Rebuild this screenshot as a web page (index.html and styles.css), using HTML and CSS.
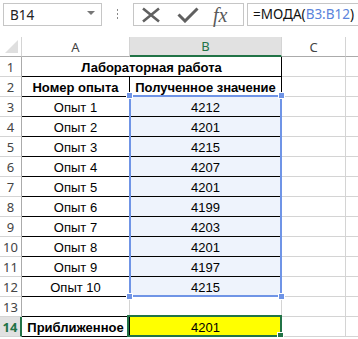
FILE: index.html
```html
<!DOCTYPE html>
<html lang="ru">
<head>
    <meta charset="utf-8">
    <title>МОДА</title>
    <link rel="stylesheet" href="styles.css">
</head>
<body>
    <div class="toolbar">
        <div class="name-box">
            <span>B14</span>
            <span class="drop"></span>
        </div>
        <div class="grip">
            <svg width="3" height="11" viewBox="0 0 3 11"><rect x="1" y="0" width="1" height="2" fill="#8a8a8a"/><rect x="1" y="4" width="1" height="2" fill="#8a8a8a"/><rect x="1" y="8" width="1" height="2" fill="#8a8a8a"/></svg>
        </div>
        <div class="buttons">
            <svg class="icon-x" width="20" height="16" viewBox="0 0 20 16"><path d="M2 1.5 L18 14.5 M18 1.5 L2 14.5" stroke="#606060" stroke-width="2.6" fill="none"/></svg>
            <svg class="icon-ok" width="22" height="16" viewBox="0 0 22 16"><path d="M1.5 7.5 L8 14 L20.5 1.5" stroke="#606060" stroke-width="3" fill="none"/></svg>
            <span class="fx">fx</span>
        </div>
        <div class="formula">=МОДА(<span class="ref">B3:B12</span>)</div>
    </div>

    <div class="sheet">
        <div class="corner"><span class="tri"></span></div>
        <div class="col-head">A</div>
        <div class="col-head active">B</div>
        <div class="col-head">C</div>
        <div class="col-head last"></div>

        <div class="row-head">1</div>
        <div class="cell bold merged bd-r bd-b">Лабораторная работа</div>
        <div class="cell"></div>
        <div class="cell last"></div>

        <div class="row-head">2</div>
        <div class="cell bold bd-r bd-b">Номер опыта</div>
        <div class="cell bold bd-r bd-b">Полученное значение</div>
        <div class="cell"></div>
        <div class="cell last"></div>

        <div class="row-head">3</div>
        <div class="cell bd-r bd-b">Опыт 1</div>
        <div class="cell sel bd-r bd-b">4212</div>
        <div class="cell"></div>
        <div class="cell last"></div>

        <div class="row-head">4</div>
        <div class="cell bd-r bd-b">Опыт 2</div>
        <div class="cell sel bd-r bd-b">4201</div>
        <div class="cell"></div>
        <div class="cell last"></div>

        <div class="row-head">5</div>
        <div class="cell bd-r bd-b">Опыт 3</div>
        <div class="cell sel bd-r bd-b">4215</div>
        <div class="cell"></div>
        <div class="cell last"></div>

        <div class="row-head">6</div>
        <div class="cell bd-r bd-b">Опыт 4</div>
        <div class="cell sel bd-r bd-b">4207</div>
        <div class="cell"></div>
        <div class="cell last"></div>

        <div class="row-head">7</div>
        <div class="cell bd-r bd-b">Опыт 5</div>
        <div class="cell sel bd-r bd-b">4201</div>
        <div class="cell"></div>
        <div class="cell last"></div>

        <div class="row-head">8</div>
        <div class="cell bd-r bd-b">Опыт 6</div>
        <div class="cell sel bd-r bd-b">4199</div>
        <div class="cell"></div>
        <div class="cell last"></div>

        <div class="row-head">9</div>
        <div class="cell bd-r bd-b">Опыт 7</div>
        <div class="cell sel bd-r bd-b">4203</div>
        <div class="cell"></div>
        <div class="cell last"></div>

        <div class="row-head">10</div>
        <div class="cell bd-r bd-b">Опыт 8</div>
        <div class="cell sel bd-r bd-b">4201</div>
        <div class="cell"></div>
        <div class="cell last"></div>

        <div class="row-head">11</div>
        <div class="cell bd-r bd-b">Опыт 9</div>
        <div class="cell sel bd-r bd-b">4197</div>
        <div class="cell"></div>
        <div class="cell last"></div>

        <div class="row-head">12</div>
        <div class="cell bd-r bd-b">Опыт 10</div>
        <div class="cell sel bd-r bd-b">4215</div>
        <div class="cell"></div>
        <div class="cell last"></div>

        <div class="row-head">13</div>
        <div class="cell bd-b"></div>
        <div class="cell"></div>
        <div class="cell"></div>
        <div class="cell last"></div>

        <div class="row-head active">14</div>
        <div class="cell bold bd-r bd-b">Приближенное</div>
        <div class="cell yellow bd-r bd-b">4201</div>
        <div class="cell"></div>
        <div class="cell last"></div>

        <!-- range highlight for B3:B12 -->
        <div class="range">
            <span class="handle tl"></span>
            <span class="handle tr"></span>
            <span class="handle bl"></span>
            <span class="handle br"></span>
        </div>

        <!-- active cell B14 -->
        <div class="active-cell"><span class="fill-handle"></span></div>
    </div>
</body>
</html>
```

FILE: styles.css
```css
/* Page reset */
body {
    margin: 0;
    background: #ffffff;
    overflow: hidden;
    font-family: "Liberation Sans", Arial, sans-serif;
}

/* Formula bar strip */
.toolbar {
    display: flex;
    align-items: flex-start;
    height: 37px;
    padding-top: 3px;
    box-sizing: border-box;
}

.name-box {
    margin-left: 3px;
    width: 99px;
    height: 23px;
    box-sizing: border-box;
    border: 1px solid #c6c6c6;
    display: flex;
    align-items: center;
    justify-content: space-between;
    padding: 0 6px 0 6px;
    font-family: "Noto Sans", sans-serif;
    font-size: 13.5px;
    color: #222;
}

/* little dropdown arrow in the name box */
.drop {
    width: 0;
    height: 0;
    border-left: 4px solid transparent;
    border-right: 4px solid transparent;
    border-top: 4px solid #777;
    margin-top: -4px;
}

.grip {
    width: 31px;
    height: 23px;
    display: flex;
    align-items: center;
    justify-content: center;
}

.buttons {
    width: 111px;
    height: 23px;
    box-sizing: border-box;
    border: 1px solid #c6c6c6;
    display: flex;
    align-items: center;
    padding-left: 7px;
}

.icon-x {
    margin-top: 1px;
}

.icon-ok {
    margin-left: 16px;
    margin-top: 1px;
}

.fx {
    margin-left: 14px;
    font-family: "Liberation Serif", serif;
    font-style: italic;
    font-size: 20px;
    color: #5a5a5a;
    line-height: 20px;
}

.formula {
    flex: 1;
    margin-left: 3px;
    margin-right: -2px;
    height: 23px;
    box-sizing: border-box;
    border: 1px solid #c6c6c6;
    padding-left: 5px;
    font-family: "Noto Sans", sans-serif;
    font-size: 13.5px;
    line-height: 21px;
    color: #111;
    white-space: nowrap;
    overflow: hidden;
}

.ref {
    color: #5b84dc;
}

/* Worksheet grid */
.sheet {
    position: relative;
    display: grid;
    grid-template-columns: 22px 108px 152px 64px 12px;
    grid-auto-rows: 20px;
    font-size: 13px;
    color: #000;
}

.corner,
.col-head,
.row-head,
.cell {
    box-sizing: border-box;
    border-right: 1px solid #d4d4d4;
    border-bottom: 1px solid #d4d4d4;
}

.last {
    border-right: none;
}

.corner {
    position: relative;
    border-bottom-color: #ababab;
    border-right-color: #d4d4d4;
}

.corner .tri {
    position: absolute;
    right: 3px;
    bottom: 3px;
    width: 0;
    height: 0;
    border-left: 13px solid transparent;
    border-bottom: 13px solid #dfdfdf;
}

.col-head {
    display: flex;
    align-items: center;
    justify-content: center;
    font-family: "Noto Sans", sans-serif;
    font-size: 13px;
    color: #444;
    border-bottom-color: #ababab;
}

.col-head.active {
    background: #e1e1e1;
    color: #217346;
    border-bottom: 2px solid #217346;
}

.row-head {
    display: flex;
    align-items: center;
    justify-content: center;
    font-family: "Noto Sans", sans-serif;
    font-size: 13px;
    color: #444;
    border-right-color: #ababab;
}

.row-head.active {
    background: #e1e1e1;
    color: #217346;
    border-right: 2px solid #217346;
    font-weight: bold;
}

.cell {
    display: flex;
    align-items: center;
    justify-content: center;
    white-space: nowrap;
    padding-top: 1px;
}

.merged {
    grid-column: span 2;
}

.bold {
    font-weight: bold;
}

.bd-r {
    border-right-color: #000;
}

.bd-b {
    border-bottom-color: #000;
}

.sel {
    background: #eef3fc;
}

.yellow {
    background: #ffff00;
}

/* Reference highlight drawn over B3:B12 */
.range {
    position: absolute;
    left: 129px;
    top: 58px;
    width: 153px;
    height: 202px;
    box-sizing: border-box;
    border: 2px solid #6f94e6;
    pointer-events: none;
}

.handle {
    position: absolute;
    width: 5px;
    height: 5px;
    background: #6f94e6;
    border: 1px solid #fff;
}

.handle.tl { left: -5px; top: -5px; }
.handle.tr { right: -5px; top: -5px; }
.handle.bl { left: -5px; bottom: -5px; }
.handle.br { right: -5px; bottom: -5px; }

/* Active cell frame */
.active-cell {
    position: absolute;
    left: 127px;
    top: 278px;
    width: 155px;
    height: 22px;
    box-sizing: border-box;
    border: 2px solid #217346;
}

.fill-handle {
    position: absolute;
    right: -4px;
    bottom: -4px;
    width: 5px;
    height: 5px;
    background: #217346;
    border: 1px solid #fff;
}
```
